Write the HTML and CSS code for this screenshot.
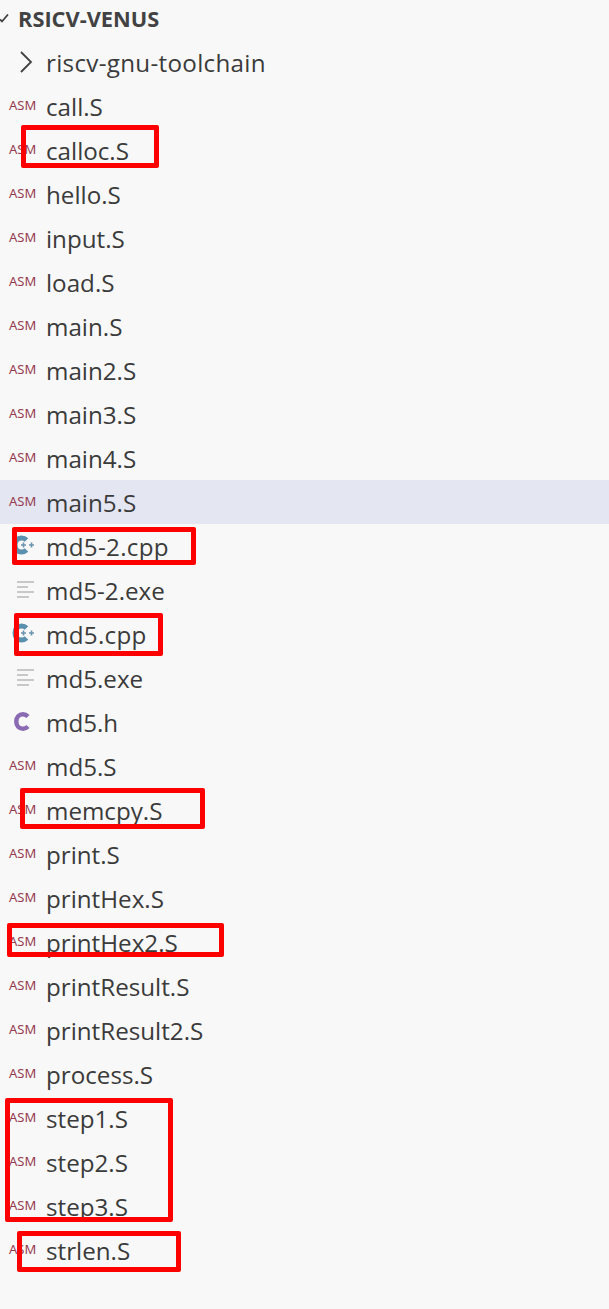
FILE: index.html
```html
<!DOCTYPE html>
<html lang="en">
<head>
  <meta charset="UTF-8">
  <meta name="viewport" content="width=device-width, initial-scale=1.0">
  <title>RSICV-VENUS</title>
  <link rel="stylesheet" href="styles.css">
</head>
<body>
  <div class="explorer">
    <div class="header">
      <svg class="twistie-open" width="10" height="10" viewBox="0 0 10 10"><path d="M0 5.5 L2 7.5 L8 0.5"/></svg>
      <span>RSICV-VENUS</span>
    </div>

    <div class="row">
      <span class="icon"><svg class="twistie" width="16" height="24" viewBox="0 0 16 24"><path d="M3 2 L13 12 L3 22"/></svg></span>
      <span class="name wide">riscv-gnu-toolchain</span>
    </div>
    <div class="row"><span class="icon asm">ASM</span><span class="name">call.S</span></div>
    <div class="row"><span class="icon asm">ASM</span><span class="name">calloc.S</span></div>
    <div class="row"><span class="icon asm">ASM</span><span class="name">hello.S</span></div>
    <div class="row"><span class="icon asm">ASM</span><span class="name">input.S</span></div>
    <div class="row"><span class="icon asm">ASM</span><span class="name">load.S</span></div>
    <div class="row"><span class="icon asm">ASM</span><span class="name">main.S</span></div>
    <div class="row"><span class="icon asm">ASM</span><span class="name">main2.S</span></div>
    <div class="row"><span class="icon asm">ASM</span><span class="name">main3.S</span></div>
    <div class="row"><span class="icon asm">ASM</span><span class="name">main4.S</span></div>
    <div class="row selected"><span class="icon asm">ASM</span><span class="name">main5.S</span></div>
    <div class="row">
      <span class="icon"><svg width="36" height="24" viewBox="0 0 36 24"><path class="cpp-c" d="M26.5 6 C25 4.5 23.5 4 21.5 4 C17.5 4 15 7 15 11 C15 15 17.5 18 21.5 18 C23.5 18 25 17.5 26.5 16"/><path class="cpp-plus" d="M21 11 H26 M23.5 8.5 V13.5 M29 11 H34 M31.5 8.5 V13.5"/></svg></span>
      <span class="name wide">md5-2.cpp</span>
    </div>
    <div class="row">
      <span class="icon"><svg width="36" height="24" viewBox="0 0 36 24"><path class="lines" d="M17 4 H34 M17 9 H28 M17 14 H34 M17 19 H29"/></svg></span>
      <span class="name">md5-2.exe</span>
    </div>
    <div class="row">
      <span class="icon"><svg width="36" height="24" viewBox="0 0 36 24"><path class="cpp-c" d="M26.5 6 C25 4.5 23.5 4 21.5 4 C17.5 4 15 7 15 11 C15 15 17.5 18 21.5 18 C23.5 18 25 17.5 26.5 16"/><path class="cpp-plus" d="M21 11 H26 M23.5 8.5 V13.5 M29 11 H34 M31.5 8.5 V13.5"/></svg></span>
      <span class="name wide">md5.cpp</span>
    </div>
    <div class="row">
      <span class="icon"><svg width="36" height="24" viewBox="0 0 36 24"><path class="lines" d="M17 4 H34 M17 9 H28 M17 14 H34 M17 19 H29"/></svg></span>
      <span class="name">md5.exe</span>
    </div>
    <div class="row">
      <span class="icon"><svg width="36" height="24" viewBox="0 0 36 24"><path class="c-header" d="M28 6.5 C26.5 5 25 4.2 23 4.2 C19 4.2 16.3 7 16.3 11.5 C16.3 16 19 18.8 23 18.8 C25 18.8 26.5 18 28 16.5"/></svg></span>
      <span class="name">md5.h</span>
    </div>
    <div class="row"><span class="icon asm">ASM</span><span class="name">md5.S</span></div>
    <div class="row"><span class="icon asm">ASM</span><span class="name">memcpy.S</span></div>
    <div class="row"><span class="icon asm">ASM</span><span class="name">print.S</span></div>
    <div class="row"><span class="icon asm">ASM</span><span class="name">printHex.S</span></div>
    <div class="row"><span class="icon asm">ASM</span><span class="name">printHex2.S</span></div>
    <div class="row"><span class="icon asm">ASM</span><span class="name">printResult.S</span></div>
    <div class="row"><span class="icon asm">ASM</span><span class="name">printResult2.S</span></div>
    <div class="row"><span class="icon asm">ASM</span><span class="name">process.S</span></div>
    <div class="row"><span class="icon asm">ASM</span><span class="name">step1.S</span></div>
    <div class="row"><span class="icon asm">ASM</span><span class="name">step2.S</span></div>
    <div class="row"><span class="icon asm">ASM</span><span class="name">step3.S</span></div>
    <div class="row"><span class="icon asm">ASM</span><span class="name">strlen.S</span></div>

    <!-- red boxes drawn over the screenshot -->
    <div class="mark mark-calloc"></div>
    <div class="mark mark-md52"></div>
    <div class="mark mark-md5"></div>
    <div class="mark mark-memcpy"></div>
    <div class="mark mark-hex2"></div>
    <div class="mark mark-steps"></div>
    <div class="mark mark-strlen"></div>
  </div>
</body>
</html>
```

FILE: styles.css
```css
html, body {
  margin: 0;
  height: 100%;
  background: #f8f8f8;
}
body {
  font-family: "Open Sans", "Noto Sans", sans-serif;
  color: #3b3b3b;
  overflow: hidden;
}
.explorer {
  position: relative;
}
.header {
  height: 40px;
  box-sizing: border-box;
  padding-bottom: 3px;
  display: flex;
  align-items: center;
  font-size: 21.8px;
  font-weight: 700;
  color: #424242;
}
.twistie-open {
  width: 10px;
  flex: none;
  margin-right: 8px;
}
.twistie-open path, .twistie path {
  fill: none;
  stroke: #424242;
  stroke-width: 1.8;
}
.row {
  height: 44px;
  display: flex;
  align-items: center;
}
.row.selected {
  background: #e4e6f1;
}
.icon {
  width: 46px;
  flex: none;
  display: flex;
  align-items: center;
}
.twistie {
  margin-left: 18px;
}
.asm {
  padding-left: 9px;
  width: 37px;
  font-family: "Noto Sans", sans-serif;
  font-size: 13px;
  color: #963c50;
  margin-top: -2px;
}
.name {
  font-size: 24.2px;
  line-height: 44px;
  padding-top: 2px;
}
.name.wide {
  letter-spacing: 0.3px;
}
.cpp-c {
  fill: none;
  stroke: #5b8fae;
  stroke-width: 5;
}
.cpp-plus {
  fill: none;
  stroke: #6a94ad;
  stroke-width: 1.6;
}
.lines {
  fill: none;
  stroke: #c8c8c8;
  stroke-width: 2;
}
.c-header {
  fill: none;
  stroke: #8a6bb3;
  stroke-width: 4.5;
}
.mark {
  position: absolute;
  border: 5px solid #ff0000;
  border-radius: 2px;
  box-sizing: border-box;
}
.mark-calloc { left: 21px; top: 125px; width: 138px; height: 43px; }
.mark-md52 { left: 12px; top: 527px; width: 184px; height: 38px; }
.mark-md5 { left: 14px; top: 613px; width: 149px; height: 43px; }
.mark-memcpy { left: 20px; top: 788px; width: 185px; height: 41px; }
.mark-hex2 { left: 7px; top: 923px; width: 217px; height: 34px; }
.mark-steps { left: 5px; top: 1098px; width: 168px; height: 124px; }
.mark-strlen { left: 17px; top: 1231px; width: 164px; height: 41px; }
```
